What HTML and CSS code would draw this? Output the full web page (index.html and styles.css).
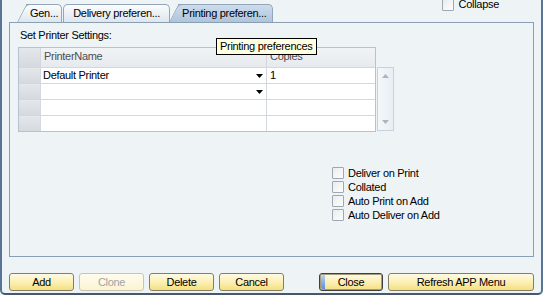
FILE: index.html
```html
<!DOCTYPE html>
<html lang="en">
<head>
    <meta charset="UTF-8">
    <meta name="viewport" content="width=device-width, initial-scale=1.0">
    <title>Printing preferences</title>
    <link rel="stylesheet" href="styles.css">
</head>
<body>

    <div class="window">
        <div class="tabs">
            <div class="tab slant tab-gen">Gen...</div>
            <div class="tab tab-delivery">Delivery preferen...</div>
            <div class="tab slant active tab-printing">Printing preferen...</div>
            <label class="collapse"><span class="check"></span>Collapse</label>
        </div>

        <div class="panel">
            <div class="caption">Set Printer Settings:</div>

            <div class="grid-wrap">
                <div class="grid">
                    <!-- header -->
                    <div class="cell rowhead head"></div>
                    <div class="cell head">PrinterName</div>
                    <div class="cell head">Copies</div>
                    <!-- rows -->
                    <div class="cell rowhead"></div>
                    <div class="cell combo">Default Printer<svg class="arrow" width="7" height="4" viewBox="0 0 7 4"><polygon points="0,0 7,0 3.5,4" fill="#000"/></svg></div>
                    <div class="cell num">1</div>
                    <div class="cell rowhead"></div>
                    <div class="cell combo"><span></span><svg class="arrow" width="7" height="4" viewBox="0 0 7 4"><polygon points="0,0 7,0 3.5,4" fill="#000"/></svg></div>
                    <div class="cell num"></div>
                    <div class="cell rowhead"></div>
                    <div class="cell"></div>
                    <div class="cell"></div>
                    <div class="cell rowhead"></div>
                    <div class="cell"></div>
                    <div class="cell"></div>
                </div>
                <div class="scrollbar">
                    <svg width="7" height="4" viewBox="0 0 7 4"><polygon points="0,4 7,4 3.5,0" fill="#a9b5c1"/></svg>
                    <svg width="7" height="4" viewBox="0 0 7 4"><polygon points="0,0 7,0 3.5,4" fill="#a9b5c1"/></svg>
                </div>
            </div>

            <div class="options">
                <label class="option"><span class="check"></span>Deliver on Print</label>
                <label class="option"><span class="check"></span>Collated</label>
                <label class="option"><span class="check"></span>Auto Print on Add</label>
                <label class="option"><span class="check"></span>Auto Deliver on Add</label>
            </div>

            <div class="tooltip">Printing preferences</div>
        </div>

        <div class="buttons">
            <button class="btn">Add</button>
            <button class="btn" disabled>Clone</button>
            <button class="btn">Delete</button>
            <button class="btn">Cancel</button>
            <button class="btn default">Close</button>
            <button class="btn wide">Refresh APP Menu</button>
        </div>
    </div>

</body>
</html>
```

FILE: styles.css
```css
body {
    margin: 0;
    font-family: "Liberation Sans", Arial, sans-serif;
    font-size: 11px;
    letter-spacing: -0.3px;
    color: #000;
    background-color: #eef4f6;
}

.window {
    box-sizing: border-box;
    width: 543px;
    height: 295px;
    border: 2px solid #5a7495;
    border-top: none;
    border-bottom-color: #47586d;
    border-radius: 0 0 5px 5px;
    background-color: #eef4f6;
    overflow: hidden;
}

/* tab strip */
.tabs {
    display: flex;
    align-items: flex-end;
    height: 22px;
    padding-left: 24px;
}
.tab {
    position: relative;
    z-index: 0;
    height: 17px;
    line-height: 17px;
    white-space: nowrap;
    border: 1px solid #93a5b8;
    border-bottom: none;
    border-left: none;
    border-radius: 0 5px 0 0;
    background: linear-gradient(#fbfcfd, #dde6ee);
}
.tab.slant::before {
    content: '';
    position: absolute;
    z-index: -1;
    left: -9px;
    top: -1px;
    bottom: 0;
    width: 16px;
    border-left: 1px solid #93a5b8;
    border-top: 1px solid #93a5b8;
    border-top-left-radius: 4px;
    background: inherit;
    transform: skewX(-27deg);
    transform-origin: bottom left;
}
.tab.active {
    background: linear-gradient(#cddced, #aec5dc);
}
.tab-gen {
    padding: 0 3px 0 4px;
}
.tab-delivery {
    margin-left: 1px;
    padding: 0 9px 0 9px;
    border-left: 1px solid #93a5b8;
    border-radius: 5px 5px 0 0;
}
.tab-printing {
    margin-left: 8px;
    padding: 0 5px 0 4px;
}

.collapse {
    align-self: flex-start;
    display: flex;
    align-items: center;
    margin-top: -2px;
    margin-left: 169px;
    line-height: 13px;
}

.check {
    box-sizing: border-box;
    width: 12px;
    height: 12px;
    margin-right: 5px;
    border: 1px solid #9ea8b2;
    border-radius: 1px;
    background: linear-gradient(135deg, #e9ecef, #fdfdfd);
}

/* main panel */
.panel {
    position: relative;
    height: 227px;
    margin: 0 7px;
    padding: 6px 8px 0;
    border: 1px solid #8b9fb3;
    background-color: #eef4f6;
}
.caption {
    padding-left: 2px;
    line-height: 13px;
}

.grid-wrap {
    display: flex;
    margin-top: 5px;
}
.grid {
    display: grid;
    grid-template-columns: 21px 225px 108px;
    grid-template-rows: 19px repeat(4, 15px);
    gap: 1px;
    border: 1px solid #b6c2ce;
    background-color: #d2d8de;
}
.cell {
    background-color: #fff;
    line-height: 15px;
    padding-left: 2px;
    white-space: nowrap;
}
.cell.head {
    line-height: 16px;
    padding-left: 3px;
    color: #4d4d4d;
    background: linear-gradient(#f1f4f6, #e6eaee);
}
.cell.rowhead {
    padding: 0;
    background: linear-gradient(#e4e7eb, #d5dadf);
}
.cell.combo {
    display: flex;
    align-items: center;
    justify-content: space-between;
    padding-right: 3px;
}
.cell.num {
    padding-left: 3px;
}

.scrollbar {
    box-sizing: border-box;
    display: flex;
    flex-direction: column;
    justify-content: space-between;
    align-items: center;
    width: 17px;
    height: 64px;
    margin: 20px 0 0 1px;
    padding: 6px 0 6px;
    border: 1px solid #c8d2dc;
    background: linear-gradient(to right, #f5f8fa, #e8eef3);
}

.options {
    margin: 34px 0 0 314px;
}
.option {
    display: flex;
    align-items: center;
    height: 14px;
    line-height: 14px;
}
.option .check {
    margin-right: 4px;
}

.tooltip {
    position: absolute;
    left: 206px;
    top: 15px;
    box-sizing: border-box;
    width: 101px;
    height: 17px;
    padding-left: 3px;
    line-height: 15px;
    border: 1px solid #000;
    background-color: #ffffe1;
}

/* bottom buttons */
.buttons {
    display: flex;
    gap: 5px;
    margin-top: 16px;
    padding-left: 7px;
}
.btn {
    position: relative;
    box-sizing: border-box;
    width: 65px;
    height: 18px;
    padding: 0;
    font-family: inherit;
    font-size: 11px;
    letter-spacing: -0.3px;
    line-height: 16px;
    color: #000;
    border: 1px solid #857e66;
    border-radius: 3px;
    background: linear-gradient(#fffbe4, #fbeeb0 55%, #f5df80);
}
.btn:disabled {
    color: #a3a3a3;
    border-color: #c9c5b4;
    background: linear-gradient(#fffcee, #fbf3d3);
}
.btn.default {
    width: 64px;
    margin-left: 30px;
    border-color: #3f3f3f;
    box-shadow: inset 0 0 0 1px #a59c7c;
}
.btn.default::before {
    content: '';
    position: absolute;
    left: 1px;
    top: 1px;
    bottom: 1px;
    width: 4px;
    border-radius: 2px 0 0 2px;
    background: linear-gradient(#b9d2f4, #5f8fdc);
}
.btn.wide {
    width: 146px;
}
```
